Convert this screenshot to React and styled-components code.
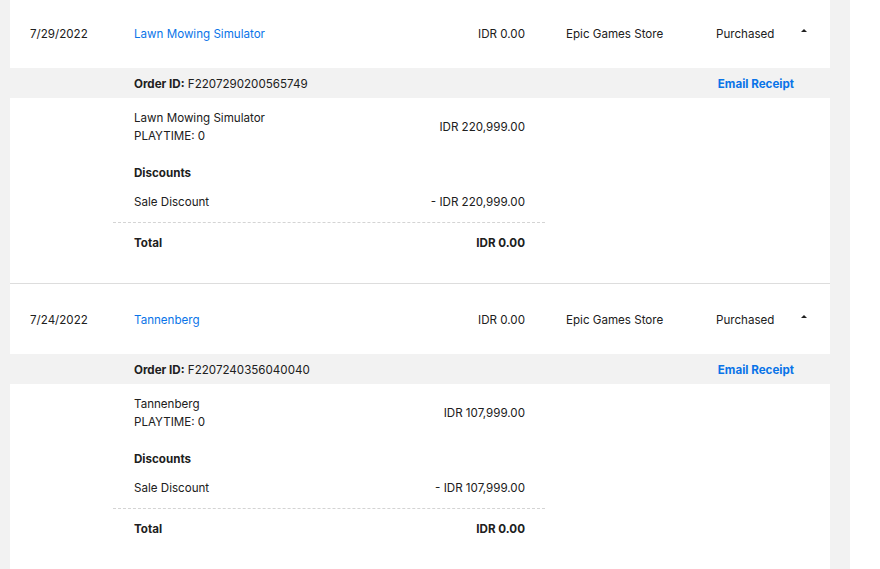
import React from 'react';
import styled, { createGlobalStyle } from 'styled-components';

const GlobalStyle = createGlobalStyle`
  html, body {
    margin: 0;
    padding: 0;
    background: #ffffff;
    font-family: Inter, "Noto Sans", sans-serif;
    color: #202020;
  }
`;

const Page = styled.div`
  width: 850px;
  min-height: 569px;
  background: #f2f2f2;
  padding: 0 20px 0 10px;
  box-sizing: border-box;
  overflow: hidden;
`;

const List = styled.div`
  margin-top: -2px;
`;

const Order = styled.div`
  border-top: ${p => (p.$first ? 'none' : '1px solid #dddddd')};
`;

const SummaryRow = styled.div`
  display: grid;
  grid-template-columns: 104px 291px 100px 191px 84px 20px;
  align-items: center;
  box-sizing: border-box;
  height: 70px;
  padding: 2px 0 0 20px;
  background: #ffffff;
  font-size: 11.6px;
`;

const Cell = styled.div`
  white-space: nowrap;
  text-align: ${p => (p.$right ? 'right' : 'left')};
  padding-left: ${p => p.$indent || 0}px;
`;

const GameLink = styled.a`
  color: #0a74e8;
  text-decoration: none;
  cursor: pointer;
`;

const Caret = styled.span`
  display: block;
  width: 0;
  height: 0;
  margin-left: 1px;
  margin-top: -5px;
  border-left: 3px solid transparent;
  border-right: 3px solid transparent;
  border-bottom: 3px solid #202020;
`;

const OrderBar = styled.div`
  display: flex;
  justify-content: space-between;
  align-items: center;
  box-sizing: border-box;
  height: 30px;
  padding: 2px 36px 0 124px;
  background: #f2f2f2;
  font-size: 11.6px;
`;

const OrderLabel = styled.span`
  font-weight: 700;
`;

const ReceiptLink = styled.a`
  color: #0a74e8;
  font-weight: 700;
  cursor: pointer;
`;

const Details = styled.div`
  background: #ffffff;
  padding: 11px 0 31px 103px;
`;

const Breakdown = styled.div`
  width: 432px;
  font-size: 11.6px;
  line-height: 18px;
`;

const Line = styled.div`
  display: flex;
  justify-content: space-between;
  align-items: center;
  padding: 0 20px 0 21px;
  margin-top: ${p => p.$top || 0}px;
  font-weight: ${p => (p.$bold ? 700 : 400)};
`;

const Dashed = styled.div`
  margin-top: 11px;
  border-top: 1px dashed #d4d4d4;
`;

const orders = [
  {
    date: '7/29/2022',
    title: 'Lawn Mowing Simulator',
    id: 'F2207290200565749',
    price: 'IDR 220,999.00',
  },
  {
    date: '7/24/2022',
    title: 'Tannenberg',
    id: 'F2207240356040040',
    price: 'IDR 107,999.00',
  },
];

export default function App() {
  return (
    <Page>
      <GlobalStyle />
      <List>
        {orders.map((o, i) => (
          <Order key={o.id} $first={i === 0}>
            <SummaryRow>
              <Cell>{o.date}</Cell>
              <Cell><GameLink>{o.title}</GameLink></Cell>
              <Cell $right>IDR 0.00</Cell>
              <Cell $indent={41}>Epic Games Store</Cell>
              <Cell>Purchased</Cell>
              <Cell><Caret /></Cell>
            </SummaryRow>
            <OrderBar>
              <span><OrderLabel>Order ID:</OrderLabel> {o.id}</span>
              <ReceiptLink>Email Receipt</ReceiptLink>
            </OrderBar>
            <Details>
              <Breakdown>
                <Line>
                  <div>
                    <div>{o.title}</div>
                    <div>PLAYTIME: 0</div>
                  </div>
                  <div>{o.price}</div>
                </Line>
                <Line $top={19} $bold>Discounts</Line>
                <Line $top={11}>
                  <span>Sale Discount</span>
                  <span>- {o.price}</span>
                </Line>
                <Dashed />
                <Line $top={11} $bold>
                  <span>Total</span>
                  <span>IDR 0.00</span>
                </Line>
              </Breakdown>
            </Details>
          </Order>
        ))}
      </List>
    </Page>
  );
}
